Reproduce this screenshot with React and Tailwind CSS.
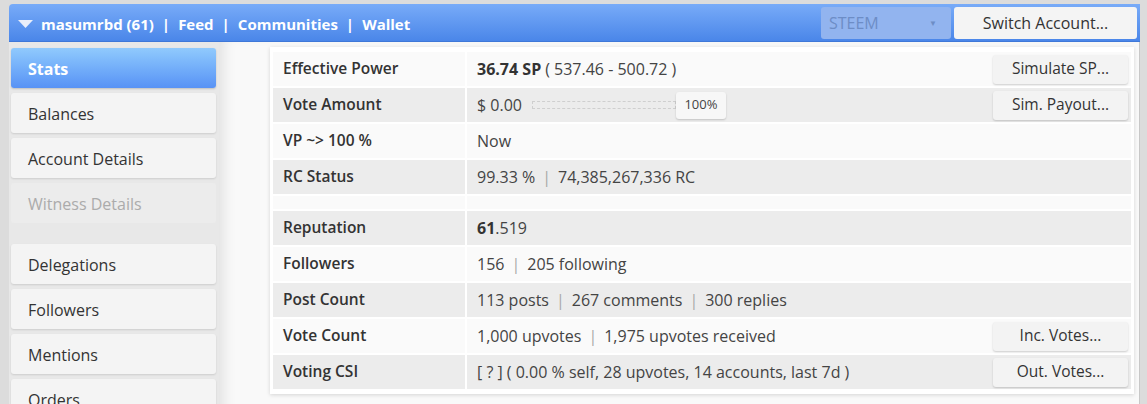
import React from 'react';

const font = { fontFamily: '"Open Sans", "Noto Sans", sans-serif' };

const Sep = () => <span className="mx-[7px] text-[#a8a8a8]">|</span>;

const navItems = [
  { label: 'Stats', active: true },
  { label: 'Balances' },
  { label: 'Account Details' },
  { label: 'Witness Details', disabled: true },
  { spacer: true },
  { label: 'Delegations' },
  { label: 'Followers' },
  { label: 'Mentions' },
  { label: 'Orders' },
];

const SideButton = ({ item }) => {
  if (item.spacer) return <div className="h-[11px] shrink-0" />;
  let cls = 'bg-[#f4f4f4] text-[#333] shadow-[0_1px_2px_rgba(0,0,0,0.12)]';
  if (item.active) cls = 'bg-gradient-to-b from-[#90cafd] to-[#5892f5] text-white font-bold shadow-[0_1px_2px_rgba(0,0,0,0.18)]';
  if (item.disabled) cls = 'bg-[#ececec] text-[#ababab]';
  return (
    <div className={`h-[40px] shrink-0 rounded-[3px] pl-[17px] pt-[1px] flex items-center text-[16px] ${cls}`}>
      {item.label}
    </div>
  );
};

const ActionButton = ({ children }) => (
  <div className="w-[135px] h-[29px] rounded-[3px] bg-[#f3f3f3] shadow-[0_1px_2px_rgba(0,0,0,0.18)] flex items-center justify-center text-[15.5px] text-[#333]">
    {children}
  </div>
);

const Row = ({ label, dark, children, action }) => {
  const bg = dark ? 'bg-[#ececec]' : 'bg-[#fafafa]';
  return (
    <div className="flex gap-[2px] h-[34px]">
      <div className={`w-[192px] shrink-0 ${bg} pl-[10px] flex items-center text-[15.5px] font-semibold text-[#333]`}>
        {label}
      </div>
      <div className={`flex-1 ${bg} pl-[10px] pr-[3px] flex items-center text-[16px] text-[#444]`}>
        <div className="flex-1 flex items-center">{children}</div>
        {action && <ActionButton>{action}</ActionButton>}
      </div>
    </div>
  );
};

export default function App() {
  return (
    <div style={font} className="w-[1147px] h-[404px] overflow-hidden bg-[#dcdcdc] pt-[4px] pl-[9px] pr-[7px]">
      {/* header bar */}
      <div className="h-[38px] rounded-tl-[4px] bg-gradient-to-b from-[#78abf8] to-[#4a86e9] border-b border-[#3f78d8] flex items-center pl-[9px] pr-[3px]">
        <svg width="15" height="8" viewBox="0 0 15 8" className="mr-[8px] mt-[2px]">
          <path d="M0 0 H15 L7.5 8 Z" fill="#e9eefa" />
        </svg>
        <div className="flex items-center text-[15px] font-bold text-white pt-[3px]">
          <span>masumrbd (61)</span>
          <span className="mx-[8px]">|</span>
          <span>Feed</span>
          <span className="mx-[8px]">|</span>
          <span>Communities</span>
          <span className="mx-[8px]">|</span>
          <span>Wallet</span>
        </div>
        <div className="flex-1" />
        <div className="w-[130px] h-[32px] rounded-[3px] bg-[#92b4ef] flex items-center justify-between pl-[8px] pr-[14px] text-[16px] text-[#6d8dc6]">
          <span>STEEM</span>
          <span className="text-[8px]">▼</span>
        </div>
        <div className="ml-[3px] w-[183px] h-[32px] rounded-[3px] bg-[#f4f4f4] flex items-center justify-center text-[16px] text-[#333]">
          Switch Account...
        </div>
      </div>

      <div className="flex h-[400px] border-r border-[#c8c8c8]">
        {/* sidebar */}
        <div className="w-[210px] shrink-0 bg-[#e8e8e8] pl-[2px] pr-[3px] pt-[6px] flex flex-col gap-[5px]">
          {navItems.map((it, i) => (
            <SideButton key={i} item={it} />
          ))}
        </div>

        {/* content */}
        <div className="flex-1 bg-[#f9f9f9] shadow-[inset_12px_0_14px_-8px_rgba(0,0,0,0.1)] pt-[5px] pl-[51px] pr-[5px]">
          <div className="bg-white shadow-[0_1px_4px_rgba(0,0,0,0.15)] px-[3px] pt-[5px] pb-[5px] flex flex-col gap-[2px]">
            <Row label="Effective Power" action="Simulate SP...">
              <span className="font-bold text-[#333]">36.74 SP</span>
              <span className="ml-[4px]">( 537.46 - 500.72 )</span>
            </Row>
            <Row label="Vote Amount" dark action="Sim. Payout...">
              <span>$ 0.00</span>
              <div className="ml-[10px] w-[144px] h-[8px] border border-dashed border-[#cfcfcf]" />
              <div className="w-[50px] h-[27px] rounded-[3px] bg-[#f7f7f7] shadow-[0_1px_2px_rgba(0,0,0,0.18)] flex items-center justify-center text-[13px] text-[#444]">
                100%
              </div>
            </Row>
            <Row label="VP ~> 100 %">Now</Row>
            <Row label="RC Status" dark>
              99.33 %<Sep />74,385,267,336 RC
            </Row>
            <div className="flex gap-[2px] h-[13px]">
              <div className="w-[192px] bg-[#fafafa]" />
              <div className="flex-1 bg-[#fafafa]" />
            </div>
            <Row label="Reputation" dark>
              <span className="font-bold text-[#333]">61</span>.519
            </Row>
            <Row label="Followers">
              156<Sep />205 following
            </Row>
            <Row label="Post Count" dark>
              113 posts<Sep />267 comments<Sep />300 replies
            </Row>
            <Row label="Vote Count" action="Inc. Votes...">
              1,000 upvotes<Sep />1,975 upvotes received
            </Row>
            <Row label="Voting CSI" dark action="Out. Votes...">
              [ ? ] ( 0.00 % self, 28 upvotes, 14 accounts, last 7d )
            </Row>
          </div>
        </div>
      </div>
    </div>
  );
}
